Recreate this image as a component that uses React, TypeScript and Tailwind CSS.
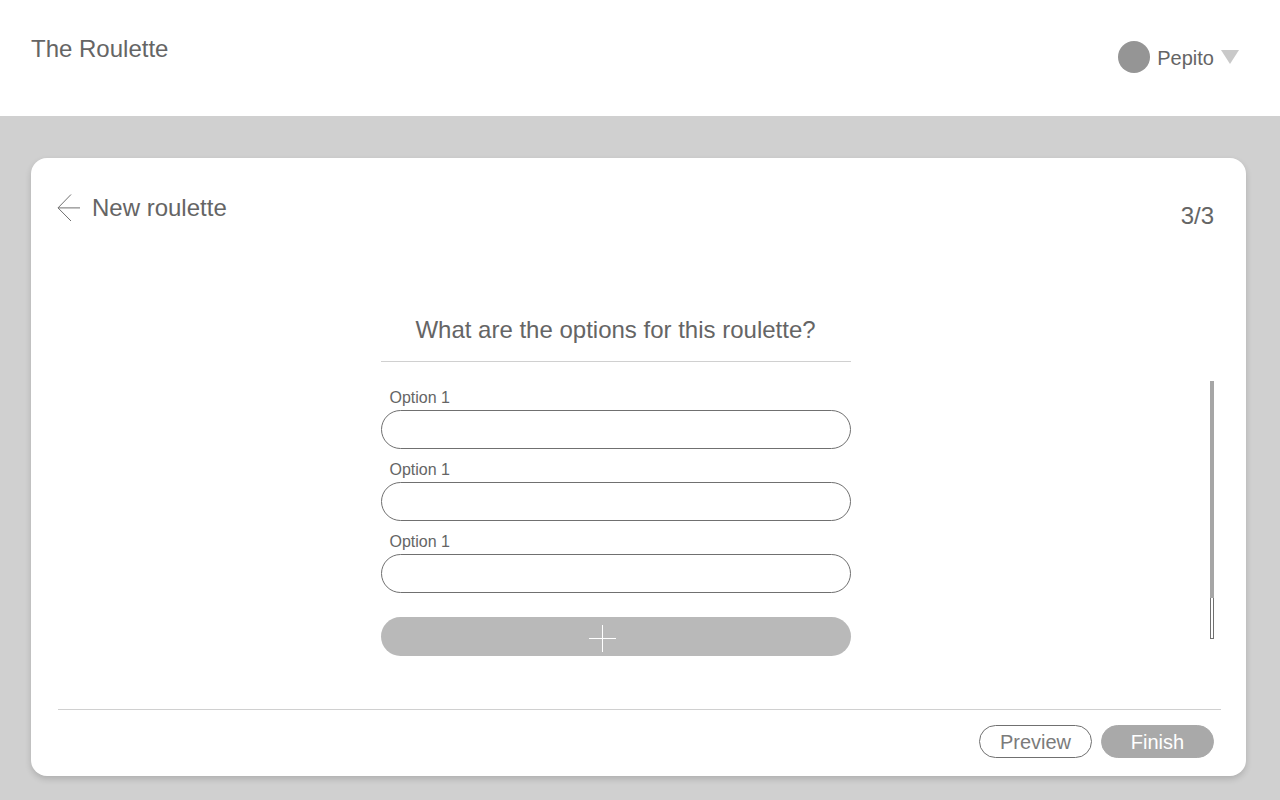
import { useId } from "react";

function OptionField({ label }: { label: string }) {
  const id = useId();
  return (
    <div>
      <label htmlFor={id} className="block pl-[9px] text-base leading-6">
        {label}
      </label>
      <input
        id={id}
        type="text"
        className="block h-[39px] w-full rounded-full border border-[#707070] bg-white px-5 text-base outline-none"
      />
    </div>
  );
}

export default function App() {
  return (
    <div className="flex min-h-screen flex-col bg-[#d0d0d0] font-['Arial_Narrow','Liberation_Sans',sans-serif] text-[#656565]">
      <header className="flex h-[116px] items-start justify-between bg-white pr-[41px] pl-[31px]">
        <h1 className="pt-[33px] text-2xl leading-8">The Roulette</h1>
        <button type="button" className="mt-[41px] flex items-center gap-[7px]">
          <span className="size-8 rounded-full bg-[#959595]" />
          <span className="pt-[2px] text-xl leading-[30px]">Pepito</span>
          <svg width="18" height="14" viewBox="0 0 18 14" aria-hidden="true">
            <path d="M0 0H18L9 14Z" fill="#c9c9c9" />
          </svg>
        </button>
      </header>

      <main className="flex flex-1 flex-col pt-[42px] pr-[34px] pb-6 pl-[31px]">
        <section className="flex flex-1 flex-col rounded-2xl bg-white pr-[25px] pl-[26px] shadow-[0_3px_6px_rgba(0,0,0,0.16)]">
          <div className="flex items-start justify-between pt-[34px] pr-[7px]">
            <div className="flex items-center gap-3">
              <a href="#back" aria-label="Back">
                <svg width="23" height="32" viewBox="0 0 23 32" fill="none" stroke="#707070" strokeWidth="1" aria-hidden="true">
                  <path d="M23 15.9H1M14 2.5L1 15.9L14 29" />
                </svg>
              </a>
              <h2 className="text-2xl leading-8">New roulette</h2>
            </div>
            <p className="pt-2 text-2xl leading-8">3/3</p>
          </div>

          <div className="flex flex-1 gap-9 pt-[82px] pr-[7px] pb-[53px]">
            <form className="flex flex-1 flex-col items-center">
              <div className="w-full max-w-[470px]">
                <h3 className="border-b border-[#d0d0d0] pb-[15px] text-center text-2xl leading-8">
                  What are the options for this roulette?
                </h3>
                <div className="flex flex-col gap-[9px] pt-6">
                  <OptionField label="Option 1" />
                  <OptionField label="Option 1" />
                  <OptionField label="Option 1" />
                </div>
                <button
                  type="button"
                  aria-label="Add option"
                  className="mt-6 flex h-[39px] w-full items-center justify-center rounded-full bg-[#b9b9b9] pt-1 pr-[27px]"
                >
                  <svg width="27" height="27" viewBox="0 0 27 27" stroke="#ffffff" strokeWidth="1" aria-hidden="true">
                    <path d="M13.5 0V27M0 13.5H27" />
                  </svg>
                </button>
              </div>
            </form>
            <div className="mt-[67px] mb-[17px] flex w-1 flex-col border border-[#707070] bg-white">
              <div className="-mx-px -mt-px h-[217px] bg-[#a6a6a6]" />
            </div>
          </div>

          <footer className="ml-px flex justify-end gap-[9px] border-t border-[#d0d0d0] pt-[15px] pr-[7px] pb-[18px]">
            <button type="button" className="h-[33px] w-[113px] rounded-full border border-[#707070] bg-white pt-px text-xl leading-[30px] text-[#7b7b7b]">
              Preview
            </button>
            <button type="button" className="h-[33px] w-[113px] rounded-full border border-[#a9a9a9] bg-[#a9a9a9] pt-px text-xl leading-[30px] text-white">
              Finish
            </button>
          </footer>
        </section>
      </main>
    </div>
  );
}
